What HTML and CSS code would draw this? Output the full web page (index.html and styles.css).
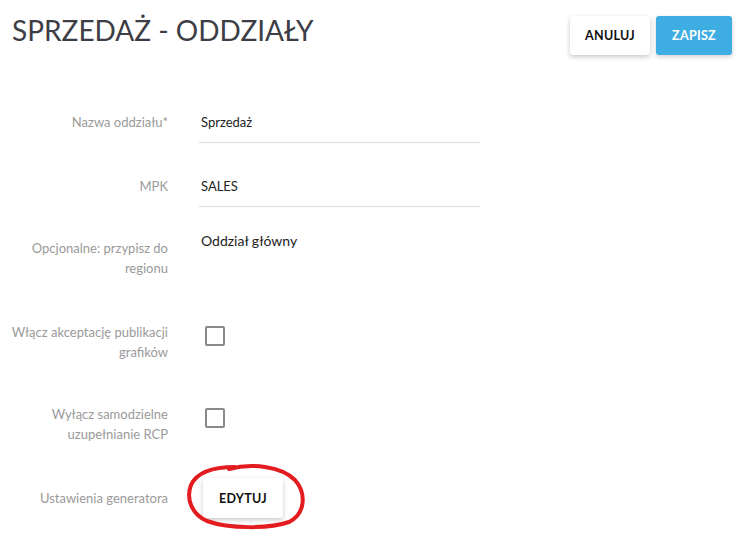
FILE: index.html
```html
<!DOCTYPE html>
<html lang="pl">
<head>
<meta charset="utf-8">
<title>Sprzedaż - Oddziały</title>
<link rel="stylesheet" href="styles.css">
</head>
<body>
<header class="header">
  <h1 class="title">SPRZEDAŻ - ODDZIAŁY</h1>
  <div class="actions">
    <button class="btn btn-default btn-cancel">ANULUJ</button>
    <button class="btn btn-primary btn-save">ZAPISZ</button>
  </div>
</header>
<form class="form">
  <div class="row row-name">
    <label class="label">Nazwa oddziału*</label>
    <div class="field">Sprzedaż</div>
  </div>
  <div class="row row-mpk">
    <label class="label">MPK</label>
    <div class="field">SALES</div>
  </div>
  <div class="row row-region">
    <label class="label label-region">Opcjonalne: przypisz do regionu</label>
    <div class="select">Oddział główny</div>
  </div>
  <div class="row row-check1">
    <label class="label">Włącz akceptację publikacji grafików</label>
    <div><span class="checkbox"></span></div>
  </div>
  <div class="row row-check2">
    <label class="label">Wyłącz samodzielne uzupełnianie RCP</label>
    <div><span class="checkbox"></span></div>
  </div>
  <div class="row row-gen">
    <label class="label">Ustawienia generatora</label>
    <div class="gen-cell">
      <button type="button" class="btn btn-default btn-edit">EDYTUJ</button>
      <svg class="scribble" width="124" height="68" viewBox="0 0 124 68">
        <path d="M 44 7 C 66 1, 96 4, 110 18 C 122 32, 120 52, 104 60 C 84 67, 44 67, 22 59 C 6 52, 1 36, 6 23 C 12 10, 30 5, 50 5" fill="none" stroke="#e31c1f" stroke-width="4" stroke-linecap="round"/>
      </svg>
    </div>
  </div>
</form>
</body>
</html>
```
FILE: styles.css
```css
* { box-sizing: border-box; }
html, body { margin: 0; background: #fff; }
body {
  font-family: Lato, "Liberation Sans", sans-serif;
  color: #222;
  width: 739px;
  height: 545px;
  overflow: hidden;
}
.header {
  display: flex;
  justify-content: space-between;
  align-items: flex-start;
  padding: 12px 7px 0 12px;
}
.title {
  margin: 0;
  font-size: 28px;
  font-weight: 400;
  line-height: 36px;
  color: #3d3d45;
}
.actions {
  display: flex;
  gap: 6px;
  margin-top: 4px;
}
.btn {
  font-family: Lato, "Liberation Sans", sans-serif;
  font-weight: 700;
  font-size: 12.5px;
  letter-spacing: 0.3px;
  height: 39px;
  padding: 0;
  border: none;
  border-radius: 3px;
  cursor: pointer;
  text-align: center;
}
.btn-default {
  background: #fff;
  color: #111;
  box-shadow: 0 2px 5px rgba(0,0,0,0.22);
}
.btn-cancel { width: 80px; }
.btn-save { width: 76px; }
.btn-primary {
  background: #3eade2;
  color: #fff;
  box-shadow: 0 2px 5px rgba(0,0,0,0.18);
}
.form {
  display: flex;
  flex-direction: column;
  padding-left: 4px;
  margin-top: 57px;
}
.row {
  display: grid;
  grid-template-columns: 164px 280px;
  column-gap: 32px;
  align-items: start;
}
.label {
  text-align: right;
  font-size: 13px;
  line-height: 20px;
  color: #9a9a9a;
}
.field {
  font-size: 13px;
  line-height: 20px;
  color: #222;
  padding: 0 2px 10px;
  border-bottom: 1px solid #dcdcdc;
  margin-left: -1px;
}
.row-mpk { margin-top: 33px; }
.row-region { margin-top: 24px; }
.label-region { padding-top: 7px; }
.select {
  font-size: 14px;
  line-height: 20px;
  color: #222;
  padding-left: 1px;
}
.row-check1 { margin-top: 44px; }
.row-check2 { margin-top: 42px; }
.checkbox {
  display: block;
  width: 20px;
  height: 20px;
  margin: 4px 0 0 5px;
  border: 2px solid #8a8a8a;
  border-radius: 2px;
}
.row-gen { margin-top: 34px; align-items: center; }
.gen-cell { position: relative; height: 40px; }
.btn-edit {
  height: 40px;
  width: 80px;
  margin-left: 3px;
}
.scribble {
  position: absolute;
  left: -15px;
  top: -16px;
  pointer-events: none;
}
```
